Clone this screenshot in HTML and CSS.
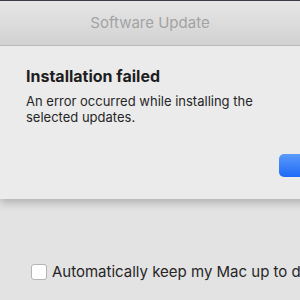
FILE: index.html
```html
<!DOCTYPE html>
<html>
<head>
<meta charset="utf-8">
<link rel="stylesheet" href="styles.css">
</head>
<body>
<div class="window">
  <div class="titlebar">Software Update</div>
  <div class="content">
    <div class="behind-icon"></div>
    <div class="sheet">
      <div class="sheet-title">Installation failed</div>
      <div class="sheet-text">An error occurred while installing the selected updates.</div>
      <div class="sheet-actions"><div class="btn"></div></div>
    </div>
    <div class="auto-row">
      <span class="checkbox"></span>
      <span class="auto-label">Automatically keep my Mac up to date</span>
    </div>
  </div>
</div>
</body>
</html>
```
FILE: styles.css
```css
html, body { margin: 0; padding: 0; }
body {
  width: 300px;
  height: 300px;
  overflow: hidden;
  background: #e4e4e4;
  font-family: Inter, "Noto Sans", sans-serif;
}
.window { width: 300px; height: 300px; display: flex; flex-direction: column; overflow: hidden; }
.titlebar {
  border-top: 1px solid #3a3a4a;
  border-bottom: 1px solid #b9b9b9;
  background: linear-gradient(#e6e6e6, #d2d2d2);
  color: #a3a3a3;
  font-size: 15px;
  display: flex;
  align-items: center;
  justify-content: center;
  padding-bottom: 1px;
  box-sizing: border-box;
  height: 46px;
}
.content { position: relative; flex: 1; background: #e3e3e3; overflow: hidden; }
.behind-icon {
  position: absolute;
  left: 0; top: 53px;
  width: 2px; height: 38px;
  background: #9a9a9a;
}
.sheet {
  position: relative;
  margin: 0 -10px 0 0;
  height: 153px;
  background: #ebebeb;
  box-shadow: 0 4px 8px rgba(0,0,0,0.22);
  padding: 20px 0 0 26px;
  box-sizing: border-box;
}
.sheet-title { font-weight: 700; font-size: 16px; color: #1e1e1e; line-height: 20px; }
.sheet-text { margin-top: 7px; font-size: 13px; color: #262626; line-height: 16px; width: 240px; }
.sheet-actions { display: flex; justify-content: flex-end; margin-top: 29px; }
.btn {
  width: 40px; height: 23px;
  border-radius: 5px;
  background: linear-gradient(#5b9bfb, #1f69f7);
  margin-right: -9px;
}
.auto-row {
  position: absolute;
  left: 31px; top: 216px;
  display: flex; align-items: center; gap: 5px;
  white-space: nowrap;
}
.checkbox {
  width: 14px; height: 14px;
  border: 1px solid #b5b5b5;
  border-radius: 3px;
  background: #ffffff;
}
.auto-label { font-size: 15px; color: #262626; }
```
